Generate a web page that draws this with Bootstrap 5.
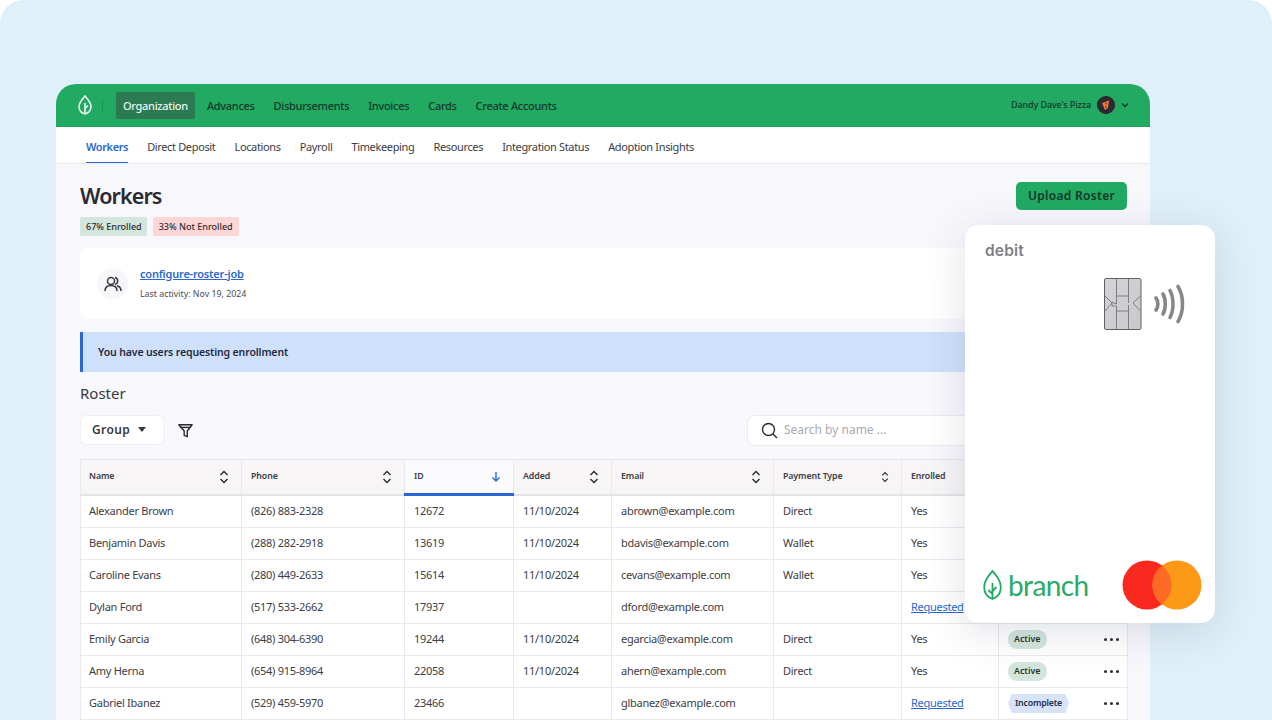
<!DOCTYPE html>
<html lang="en"><head><meta charset="utf-8"><title>Workers</title>
<link href="https://cdn.jsdelivr.net/npm/bootstrap@5.3.0/dist/css/bootstrap.min.css" rel="stylesheet">
<style>
html,body{height:720px;overflow:hidden;background:#fff;font-family:"Noto Sans",sans-serif;}
.stage{position:relative;height:720px;overflow:hidden;background:#e0f0fa;border-radius:24px 24px 0 0;padding:84px 122px 0 56px;}
.appwin{background:#f8f7fc;height:636px;border-radius:20px 20px 0 0;overflow:hidden;}
.topbar{background:#22a962;height:43px;padding:0 21px 0 22px;color:#14382a;font-size:11px;font-weight:500;letter-spacing:-.3px;border-bottom:1px solid #1f9f5c;}
.logo-sep{width:1px;height:12px;background:#1e9355;margin:0 13px 0 10px;}
.topitem{padding:0 6px;height:27px;margin-right:7px;line-height:27px;white-space:nowrap;}
.topitem.on{background:#2b7a52;color:#e6f5ec;border-radius:2px;font-weight:500;padding:0 7px;margin-right:6px;}
.acct{font-size:9px;color:#14382a;gap:6px;letter-spacing:-.1px;}
.avatar{width:18px;height:18px;border-radius:50%;background:#2b2a33;}
.subbar{background:#fff;height:37px;border-bottom:1px solid #ebebef;padding-left:30px;font-size:11px;letter-spacing:-.35px;color:#3c3c44;gap:19px;}
.subitem{height:36px;line-height:39px;white-space:nowrap;}
.subitem.on{color:#2a68d0;font-weight:600;border-bottom:1px solid #2a68d0;letter-spacing:-.4px;}
.main{padding:18px 23px 0 24px;}
.ptitle{font-size:21.5px;font-weight:600;color:#2a2a30;line-height:28px;margin:0;letter-spacing:-.9px;}
.pill-row{gap:6px;margin-top:7px;}
.stat{font-size:9px;font-weight:500;height:19px;line-height:19px;padding:0 6px;border-radius:2px;color:#2c2c30;}
.stat-g{background:#d3e5dc;padding-right:5px;}.stat-r{background:#ffd6d6;}
.uploadbtn{background:#22a962;border:0;color:#14382a;font-size:12px;font-weight:600;letter-spacing:.3px;width:111px;height:28px;border-radius:5px;padding:0;}
.jobcard{background:#fff;height:71px;border-radius:8px;margin-top:12px;padding:0 0 0 17px;gap:12px;}
.jobicon{width:31px;height:31px;border-radius:50%;background:#f7f6f9;}
.jobtext{padding-bottom:2px;}
.joblink{font-size:11px;font-weight:600;color:#2a68d0;text-decoration:underline;line-height:15px;display:block;letter-spacing:-.2px;}
.jobsub{font-size:8.8px;color:#4b4b52;line-height:12px;margin-top:7px;}
.notice{background:#cfe0fb;border-left:3px solid #2a68d0;height:40px;margin-top:13px;padding-left:15px;font-size:10.5px;letter-spacing:-.13px;font-weight:600;color:#1f2a44;line-height:40px;}
.rosterh{font-size:15px;color:#38383f;line-height:20px;margin:11px 0 0;font-weight:400;}
.toolrow{height:30px;margin-top:12px;}
.groupbtn{background:#fff;border:1px solid #f0eff3;border-radius:6px;width:84px;height:30px;font-size:12px;font-weight:600;letter-spacing:.4px;color:#38383f;padding:0 0 0 11px;text-align:left;}
.caretdn{display:inline-block;border-left:4px solid transparent;border-right:4px solid transparent;border-top:5px solid #38383f;margin-left:4px;vertical-align:2px;}
.filtericon{margin-left:14px;}
.searchbox{background:#fff;border:1px solid #ecebf0;border-radius:8px;width:380px;height:31px;padding-left:13px;gap:6px;font-size:12px;color:#a9a9b0;}
.rostertbl{width:1047px;table-layout:fixed;border-collapse:collapse;background:#fff;margin-top:14px;font-size:11px;letter-spacing:-.27px;color:#3d3d44;}
.rostertbl th{background:#f7f5f6;height:35px;font-size:8.8px;font-weight:600;letter-spacing:-.1px;color:#3d3d44;border:1px solid #e9e8ec;border-bottom:2px solid #e4e3e7;padding:0 12px 0 9px;}
.rostertbl th:first-child,.rostertbl td:first-child{padding-left:8px;}
.rostertbl th.act{background:#fbfbfd;border-bottom:3px solid #2a68d0;}
.rostertbl td{height:32px;border:1px solid #e9e8ec;padding:0 8px 0 9px;white-space:nowrap;}
.rostertbl tbody tr:first-child td{height:33px;}
.thin{display:flex;align-items:center;justify-content:space-between;}
.reqlink{color:#2a68d0;text-decoration:underline;}
.st{display:inline-block;font-size:8.8px;font-weight:600;letter-spacing:0;height:19px;line-height:19px;color:#25352d;}
.st-a{background:#d3e5dc;border-radius:9px;padding:0 7px 0 6px;}
.st-i{background:#d6e3fb;color:#24304a;padding:0 7px;letter-spacing:-.2px;clip-path:polygon(6% 0,94% 0,100% 50%,94% 100%,6% 100%,0 50%);}
.dots{font-size:0;display:flex;gap:3px;}
.dots i{display:block;width:3px;height:3px;border-radius:50%;background:#2a2a30;}
.statuscell{display:flex;align-items:center;justify-content:space-between;}
.debit{position:absolute;left:965px;top:225px;width:250px;height:398px;background:#fff;border-radius:14px;box-shadow:0 8px 40px rgba(60,70,100,.17);}
.debit-lbl{position:absolute;left:20px;top:14px;font-size:15.5px;font-weight:600;letter-spacing:.2px;color:#807f86;font-family:"Inter",sans-serif;}
.chip{position:absolute;left:139px;top:53px;}
.wave{position:absolute;left:188px;top:59px;}
.brand{position:absolute;left:18px;top:345px;}
.brandtxt{position:absolute;left:43px;top:339px;font-size:28px;line-height:42px;color:#2aab68;font-family:"Lato",sans-serif;font-weight:400;letter-spacing:-.6px;}
.mc{position:absolute;left:157px;top:335px;}
</style></head><body>
<div class="stage">
<div class="appwin">
 <div class="topbar d-flex align-items-center">
  <svg width="14" height="20" viewBox="0 0 14 20" fill="none" stroke="#eef9f2" stroke-width="1.600"><path d="M7 1C3.500 5 1 8 1 11.500 1 15.500 3.500 18 7 19 10.500 18 13 15.500 13 11.500 13 8 10.500 5 7 1Z"/><path d="M7 19V8M7 13.500 10 10.500"/></svg>
  <div class="logo-sep"></div>
  <div class="topitem on">Organization</div>
  <div class="topitem">Advances</div>
  <div class="topitem">Disbursements</div>
  <div class="topitem">Invoices</div>
  <div class="topitem">Cards</div>
  <div class="topitem">Create Accounts</div>
  <div class="ms-auto d-flex align-items-center acct"><span>Dandy Dave's Pizza</span>
   <svg class="avatar" viewBox="0 0 18 18"><circle cx="9" cy="9" r="9" fill="#2b2a33"/><path d="M5 7 12 4.500 11 12 8 14Z" fill="#e9793a"/><circle cx="9" cy="7.500" r="1" fill="#b3361e"/><circle cx="9" cy="11" r="1" fill="#b3361e"/></svg>
   <svg width="8" height="6" viewBox="0 0 8 6" fill="none" stroke="#14382a" stroke-width="1.300"><path d="M1 1.500 4 4.500 7 1.500"/></svg>
  </div>
 </div>
 <div class="subbar d-flex">
  <div class="subitem on">Workers</div><div class="subitem">Direct Deposit</div><div class="subitem">Locations</div><div class="subitem">Payroll</div><div class="subitem">Timekeeping</div><div class="subitem">Resources</div><div class="subitem">Integration Status</div><div class="subitem">Adoption Insights</div>
 </div>
 <div class="main">
  <div class="d-flex justify-content-between align-items-start">
   <div><h1 class="ptitle">Workers</h1>
    <div class="d-flex pill-row"><span class="stat stat-g">67% Enrolled</span><span class="stat stat-r">33% Not Enrolled</span></div></div>
   <button class="uploadbtn">Upload Roster</button>
  </div>
  <div class="jobcard d-flex align-items-center">
   <div class="jobicon d-flex align-items-center justify-content-center"><svg width="18" height="16" viewBox="0 0 18 16" fill="none" stroke="#38383f" stroke-width="1.500"><circle cx="7" cy="5" r="3.500"/><path d="M1 15C1 11.500 3.500 9.500 7 9.500S13 11.500 13 15"/><path d="M11 1.600A3.500 3.500 0 0 1 11 8.400M13 9.800C15.500 10.500 17 12.200 17 15"/></svg></div>
   <div class="jobtext"><a class="joblink">configure-roster-job</a><div class="jobsub">Last activity: Nov 19, 2024</div></div>
  </div>
  <div class="notice">You have users requesting enrollment</div>
  <h2 class="rosterh">Roster</h2>
  <div class="toolrow d-flex align-items-center">
   <button class="groupbtn">Group <span class="caretdn"></span></button>
   <svg class="filtericon" width="15" height="15" viewBox="0 0 17 17" fill="none" stroke="#2a2a30" stroke-width="1.600" stroke-linejoin="round"><path d="M1 2H16L10.500 9V15.500L7 14V9Z"/><path d="M2.500 5H14.500"/></svg>
   <div class="searchbox d-flex align-items-center ms-auto"><svg width="17" height="17" viewBox="0 0 17 17" fill="none" stroke="#2a2a30" stroke-width="1.400"><circle cx="7.500" cy="7.500" r="6"/><path d="M12 12 16 16"/></svg><span>Search by name ...</span></div>
  </div>
  <table class="rostertbl">
   <colgroup><col style="width:161px"><col style="width:163px"><col style="width:109px"><col style="width:98px"><col style="width:162px"><col style="width:128px"><col style="width:97px"><col style="width:129px"></colgroup>
   <thead><tr>
    <th><div class="thin">Name<svg width="10" height="14" viewBox="0 0 10 14" fill="none" stroke="#2a2a30" stroke-width="1.400"><path d="M1.500 5 5 1.500 8.500 5M1.500 9 5 12.500 8.500 9"/></svg></div></th>
    <th><div class="thin">Phone<svg width="10" height="14" viewBox="0 0 10 14" fill="none" stroke="#2a2a30" stroke-width="1.400"><path d="M1.500 5 5 1.500 8.500 5M1.500 9 5 12.500 8.500 9"/></svg></div></th>
    <th class="act"><div class="thin">ID<svg width="10" height="11" viewBox="0 0 10 11" fill="none" stroke="#2a68d0" stroke-width="1.400"><path d="M5 1V10M1.500 6.500 5 10 8.500 6.500"/></svg></div></th>
    <th><div class="thin">Added<svg width="10" height="14" viewBox="0 0 10 14" fill="none" stroke="#2a2a30" stroke-width="1.400"><path d="M1.500 5 5 1.500 8.500 5M1.500 9 5 12.500 8.500 9"/></svg></div></th>
    <th><div class="thin">Email<svg width="10" height="14" viewBox="0 0 10 14" fill="none" stroke="#2a2a30" stroke-width="1.400"><path d="M1.500 5 5 1.500 8.500 5M1.500 9 5 12.500 8.500 9"/></svg></div></th>
    <th><div class="thin">Payment Type<svg width="8" height="12" viewBox="0 0 10 14" fill="none" stroke="#2a2a30" stroke-width="1.400"><path d="M1.500 5 5 1.500 8.500 5M1.500 9 5 12.500 8.500 9"/></svg></div></th>
    <th>Enrolled</th><th>Status</th></tr></thead>
   <tbody>
    <tr><td>Alexander Brown</td><td>(826) 883-2328</td><td>12672</td><td>11/10/2024</td><td>abrown@example.com</td><td>Direct</td><td>Yes</td><td><div class="statuscell"><span class="st st-a">Active</span><span class="dots"><i></i><i></i><i></i></span></div></td></tr>
    <tr><td>Benjamin Davis</td><td>(288) 282-2918</td><td>13619</td><td>11/10/2024</td><td>bdavis@example.com</td><td>Wallet</td><td>Yes</td><td><div class="statuscell"><span class="st st-a">Active</span><span class="dots"><i></i><i></i><i></i></span></div></td></tr>
    <tr><td>Caroline Evans</td><td>(280) 449-2633</td><td>15614</td><td>11/10/2024</td><td>cevans@example.com</td><td>Wallet</td><td>Yes</td><td><div class="statuscell"><span class="st st-a">Active</span><span class="dots"><i></i><i></i><i></i></span></div></td></tr>
    <tr><td>Dylan Ford</td><td>(517) 533-2662</td><td>17937</td><td></td><td>dford@example.com</td><td></td><td><a class="reqlink">Requested</a></td><td><div class="statuscell"><span class="st st-i">Incomplete</span><span class="dots"><i></i><i></i><i></i></span></div></td></tr>
    <tr><td>Emily Garcia</td><td>(648) 304-6390</td><td>19244</td><td>11/10/2024</td><td>egarcia@example.com</td><td>Direct</td><td>Yes</td><td><div class="statuscell"><span class="st st-a">Active</span><span class="dots"><i></i><i></i><i></i></span></div></td></tr>
    <tr><td>Amy Herna</td><td>(654) 915-8964</td><td>22058</td><td>11/10/2024</td><td>ahern@example.com</td><td>Direct</td><td>Yes</td><td><div class="statuscell"><span class="st st-a">Active</span><span class="dots"><i></i><i></i><i></i></span></div></td></tr>
    <tr><td>Gabriel Ibanez</td><td>(529) 459-5970</td><td>23466</td><td></td><td>glbanez@example.com</td><td></td><td><a class="reqlink">Requested</a></td><td><div class="statuscell"><span class="st st-i">Incomplete</span><span class="dots"><i></i><i></i><i></i></span></div></td></tr>
   </tbody>
  </table>
 </div>
</div>
<div class="debit">
 <div class="debit-lbl">debit</div>
 <svg class="chip" width="38" height="52" viewBox="0 0 38 52"><defs><linearGradient id="chipg" x1="0" y1="0" x2="1" y2="1"><stop offset="0" stop-color="#d4d4d6"/><stop offset="1" stop-color="#c9c9cc"/></linearGradient></defs><rect x=".5" y=".5" width="36.500" height="51" rx="1.500" fill="url(#chipg)" stroke="#616165"/><path d="M12.500 1V18H24.500V1M12.500 51V33H24.500V51M12.500 18V26L8 24M24.500 18V25M1 18 8 25 1 33M36.500 18 29 25 36.500 33M12.500 33V28H8L8 25M24.500 33V27" fill="none" stroke="#7e7e82" stroke-width="1"/></svg>
 <svg class="wave" width="34" height="40" viewBox="0 0 34 40" fill="none" stroke="#87878b" stroke-width="3.600" stroke-linecap="round"><path d="M3 14C5.500 17 5.500 23 3 26"/><path d="M10 10C13 15 13 25 10 30"/><path d="M17 6.500C21 14 21 26 17 33.500"/><path d="M25 2.500C31 12 31 28 25 37.500"/></svg>
 <svg class="brand" width="19" height="30" viewBox="0 0 19 30" fill="none" stroke="#22a962" stroke-width="1.800"><path d="M9.500 1C5 6.500 1.200 11 1.200 17 1.200 23.500 5 27.500 9.500 29 14 27.500 17.800 23.500 17.800 17 17.800 11 14 6.500 9.500 1Z"/><path d="M9.500 29V13M9.500 21 13.500 17M9.500 24 5.500 20"/></svg>
 <div class="brandtxt">branch</div>
 <svg class="mc" width="80" height="50" viewBox="0 0 80 50"><circle cx="25" cy="25" r="24.500" fill="#f9291f"/><circle cx="55" cy="25" r="24.500" fill="#fc9a17"/><path d="M40 5.600A24.500 24.500 0 0 1 40 44.400 24.500 24.500 0 0 1 40 5.600Z" fill="#fc6a25"/></svg>
</div>
</div>
</body></html>
